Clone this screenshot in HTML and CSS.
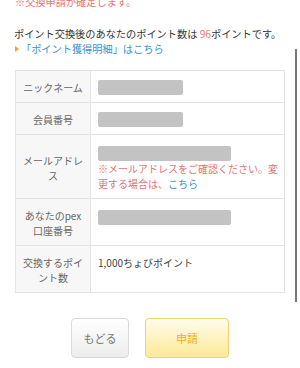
FILE: index.html
```html
<!DOCTYPE html>
<html lang="ja">
<head>
    <meta charset="UTF-8">
    <meta name="viewport" content="width=device-width, initial-scale=1.0">
    <title>ポイント交換申請の確認</title>
    <link rel="stylesheet" href="styles.css">
</head>
<body>

<div class="contenido">
    <p class="aviso">※交換申請が確定します。</p>
    <p class="puntos">ポイント交換後のあなたのポイント数は <span class="numero">96</span>ポイントです。</p>
    <p class="enlace"><span class="flecha"></span><a href="#">「ポイント獲得明細」はこちら</a></p>

    <table class="confirmar">
        <tr>
            <th>ニックネーム</th>
            <td><div class="oculto corto"></div></td>
        </tr>
        <tr>
            <th>会員番号</th>
            <td><div class="oculto corto"></div></td>
        </tr>
        <tr>
            <th>メールアドレス</th>
            <td>
                <div class="oculto largo"></div>
                <p class="nota">※メールアドレスをご確認ください。変更する場合は、<a href="#">こちら</a></p>
            </td>
        </tr>
        <tr>
            <th>あなたのpex口座番号</th>
            <td><div class="oculto largo"></div></td>
        </tr>
        <tr>
            <th>交換するポイント数</th>
            <td>1,000ちょびポイント</td>
        </tr>
    </table>

    <div class="botones">
        <button class="volver">もどる</button>
        <button class="enviar">申請</button>
    </div>
</div>

<div class="barra-scroll"></div>

</body>
</html>
```

FILE: styles.css
```css
body {
    font-family: "Noto Sans CJK JP", "Liberation Sans", sans-serif;
    margin: 0;
    background-color: white;
    color: #333;
    font-size: 10px;
    line-height: 15px;
}
p {
    margin: 0;
}
a {
    color: #3b8fd4;
    text-decoration: none;
}
.contenido {
    padding: 0 15px;
}
.aviso, .puntos, .enlace {
    font-size: 10.2px;
    white-space: nowrap;
}
.aviso {
    margin-top: -6px;
    color: #e57373;
}
.puntos {
    margin-top: 17px;
    margin-left: -1px;
}
.numero {
    color: #ec7a6e;
}
.enlace {
    display: flex;
    align-items: center;
}
.flecha {
    width: 0;
    height: 0;
    border-top: 3px solid transparent;
    border-bottom: 3px solid transparent;
    border-left: 4px solid #f2a53a;
    margin-right: 2px;
}
.confirmar {
    width: 100%;
    border-collapse: collapse;
    margin-top: 14px;
}
.confirmar th, .confirmar td {
    border: 1px solid #e3e3e3;
    padding: 9px 6px 7px;
}
.confirmar th {
    width: 62px;
    background-color: #f7f7f7;
    color: #666;
    font-weight: normal;
    text-align: center;
    vertical-align: middle;
}
.confirmar td {
    padding-left: 7px;
    padding-right: 4px;
    vertical-align: top;
    color: #444;
}
.oculto {
    height: 15px;
    background-color: #c3c3c3;
    border-radius: 2px;
}
.corto {
    width: 85px;
}
.largo {
    width: 133px;
    margin-top: 2px;
}
.nota {
    color: #e57373;
}
.botones {
    display: flex;
    justify-content: center;
    gap: 16px;
    margin-top: 25px;
}
button {
    font-family: inherit;
    height: 40px;
    border-radius: 4px;
    font-size: 11px;
    cursor: pointer;
}
button.volver {
    width: 58px;
    background: linear-gradient(#ffffff, #ececec);
    border: 1px solid #d9d9d9;
    color: #777;
}
button.enviar {
    width: 84px;
    background: linear-gradient(#fffcec, #fde996);
    border: 1px solid #f0d36e;
    color: #ebb02c;
}
.barra-scroll {
    position: absolute;
    top: 49px;
    left: 295px;
    width: 2px;
    height: 253px;
    background-color: #777;
}
```
